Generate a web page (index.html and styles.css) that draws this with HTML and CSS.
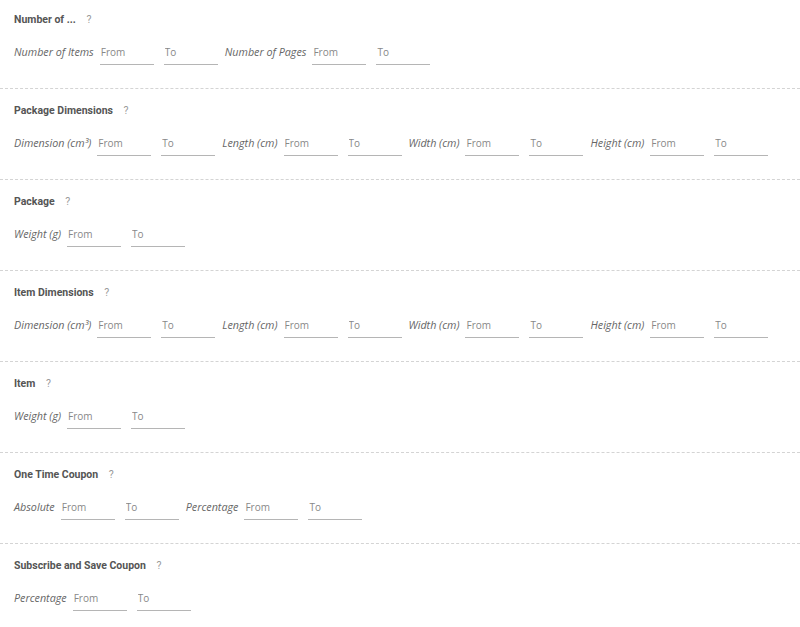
FILE: index.html
```html
<!DOCTYPE html>
<html lang="en">
<head>
  <meta charset="UTF-8">
  <title>Filters</title>
  <link rel="stylesheet" href="styles.css">
</head>
<body>
  <div class="filters">
    <div class="section">
      <div class="title">Number of ... <span class="help">?</span></div>
      <div class="row">
        <div class="range"><span class="label">Number of Items</span><input type="text" placeholder="From"><input type="text" placeholder="To"></div>
        <div class="range"><span class="label">Number of Pages</span><input type="text" placeholder="From"><input type="text" placeholder="To"></div>
      </div>
    </div>

    <div class="section">
      <div class="title">Package Dimensions <span class="help">?</span></div>
      <div class="row">
        <div class="range"><span class="label">Dimension (cm³)</span><input type="text" placeholder="From"><input type="text" placeholder="To"></div>
        <div class="range"><span class="label">Length (cm)</span><input type="text" placeholder="From"><input type="text" placeholder="To"></div>
        <div class="range"><span class="label">Width (cm)</span><input type="text" placeholder="From"><input type="text" placeholder="To"></div>
        <div class="range"><span class="label">Height (cm)</span><input type="text" placeholder="From"><input type="text" placeholder="To"></div>
      </div>
    </div>

    <div class="section">
      <div class="title">Package <span class="help">?</span></div>
      <div class="row">
        <div class="range"><span class="label">Weight (g)</span><input type="text" placeholder="From"><input type="text" placeholder="To"></div>
      </div>
    </div>

    <div class="section">
      <div class="title">Item Dimensions <span class="help">?</span></div>
      <div class="row">
        <div class="range"><span class="label">Dimension (cm³)</span><input type="text" placeholder="From"><input type="text" placeholder="To"></div>
        <div class="range"><span class="label">Length (cm)</span><input type="text" placeholder="From"><input type="text" placeholder="To"></div>
        <div class="range"><span class="label">Width (cm)</span><input type="text" placeholder="From"><input type="text" placeholder="To"></div>
        <div class="range"><span class="label">Height (cm)</span><input type="text" placeholder="From"><input type="text" placeholder="To"></div>
      </div>
    </div>

    <div class="section">
      <div class="title">Item <span class="help">?</span></div>
      <div class="row">
        <div class="range"><span class="label">Weight (g)</span><input type="text" placeholder="From"><input type="text" placeholder="To"></div>
      </div>
    </div>

    <div class="section">
      <div class="title">One Time Coupon <span class="help">?</span></div>
      <div class="row">
        <div class="range"><span class="label">Absolute</span><input type="text" placeholder="From"><input type="text" placeholder="To"></div>
        <div class="range"><span class="label">Percentage</span><input type="text" placeholder="From"><input type="text" placeholder="To"></div>
      </div>
    </div>

    <div class="section">
      <div class="title">Subscribe and Save Coupon <span class="help">?</span></div>
      <div class="row">
        <div class="range"><span class="label">Percentage</span><input type="text" placeholder="From"><input type="text" placeholder="To"></div>
      </div>
    </div>
  </div>
</body>
</html>
```

FILE: styles.css
```css
body {
  margin: 0;
  background-color: #ffffff;
  font-family: "Open Sans", Arial, sans-serif;
}

.section {
  padding: 15px 0 23px 14px;
  border-bottom: 1px dashed #d4d4d4;
}

.section:first-child {
  padding-top: 13px;
}

.section:last-child {
  border-bottom: none;
}

.title {
  font-family: Roboto, Arial, sans-serif;
  font-weight: bold;
  font-size: 10.5px;
  line-height: 14px;
  color: #555;
  margin-bottom: 17px;
}

.help {
  color: #999;
  font-weight: normal;
  margin-left: 8px;
}

.row {
  display: flex;
  align-items: flex-start;
}

.range {
  display: flex;
  align-items: flex-start;
  margin-right: 7px;
}

.label {
  font-style: italic;
  font-size: 10.75px;
  line-height: 16px;
  color: #666;
  margin-right: 6px;
}

input[type="text"] {
  width: 54px;
  box-sizing: border-box;
  margin: 0;
  padding: 0 0 4px 1px;
  border: none;
  border-bottom: 1px solid #b5b5b5;
  font-family: "Open Sans", Arial, sans-serif;
  font-size: 10px;
  line-height: 16px;
  height: 21px;
  color: #555;
  outline: none;
}

input[type="text"] + input[type="text"] {
  margin-left: 10px;
}

input::placeholder {
  color: #888;
}
```
